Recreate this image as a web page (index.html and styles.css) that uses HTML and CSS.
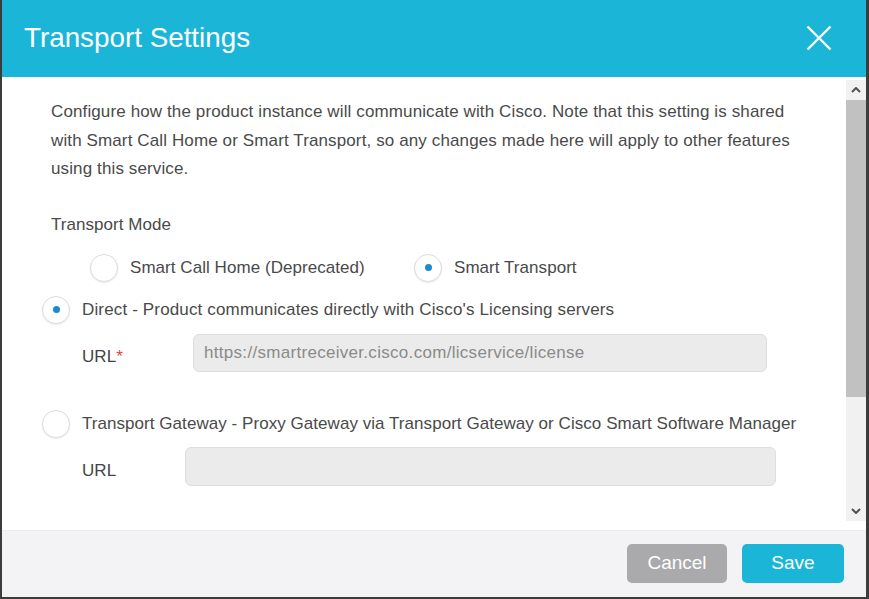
FILE: index.html
```html
<!DOCTYPE html>
<html lang="en">
<head>
  <meta charset="UTF-8" />
  <meta name="viewport" content="width=device-width, initial-scale=1.0" />
  <title>Transport Settings</title>
  <link rel="stylesheet" href="styles.css">
</head>
<body>

  <div class="dialog">

    <!-- Header -->
    <header class="dlg-head">
      <h1>Transport Settings</h1>
      <button class="close" aria-label="Close">
        <svg width="26" height="26" viewBox="0 0 26 26">
          <path d="M1.5 1.5 L24.5 24.5 M24.5 1.5 L1.5 24.5" stroke="#fff" stroke-width="2.4" fill="none" />
        </svg>
      </button>
    </header>

    <!-- Body -->
    <div class="dlg-body">
      <div class="content">
        <p class="intro">
          Configure how the product instance will communicate with Cisco. Note that this setting is shared
          with Smart Call Home or Smart Transport, so any changes made here will apply to other features
          using this service.
        </p>

        <div class="label">Transport Mode</div>

        <div class="mode-row">
          <label class="radio mode-first"><span class="dot"></span>Smart Call Home (Deprecated)</label>
          <label class="radio"><span class="dot on"></span>Smart Transport</label>
        </div>

        <label class="radio option direct"><span class="dot on"></span>Direct - Product communicates directly with Cisco's Licensing servers</label>
        <div class="url-row url-direct">
          <span class="url-label">URL<span class="req">*</span></span>
          <div class="field">https://smartreceiver.cisco.com/licservice/license</div>
        </div>

        <label class="radio option gateway"><span class="dot"></span>Transport Gateway - Proxy Gateway via Transport Gateway or Cisco Smart Software Manager</label>
        <div class="url-row url-gateway">
          <span class="url-label">URL</span>
          <div class="field"></div>
        </div>
      </div>

      <!-- fake scrollbar -->
      <div class="scrollbar">
        <div class="arrow">
          <svg width="10" height="6" viewBox="0 0 10 6"><path d="M1 5 L5 1 L9 5" stroke="#505050" stroke-width="2" fill="none" /></svg>
        </div>
        <div class="thumb"></div>
        <div class="track"></div>
        <div class="arrow">
          <svg width="10" height="6" viewBox="0 0 10 6"><path d="M1 1 L5 5 L9 1" stroke="#505050" stroke-width="2" fill="none" /></svg>
        </div>
      </div>
    </div>

    <!-- Footer -->
    <footer class="dlg-foot">
      <button class="btn cancel">Cancel</button>
      <button class="btn save">Save</button>
    </footer>

  </div>

</body>
</html>
```

FILE: styles.css
```css
* {
  box-sizing: border-box;
}

html, body {
  height: 100%;
}

body {
  margin: 0;
  padding: 0 3px 2px 2px;
  background-color: #3c3c3c;
  font-family: "Liberation Sans", Arial, sans-serif;
  color: #4a4a4a;
  overflow: hidden;
}

.dialog {
  width: 864px;
  height: 597px;
  display: flex;
  flex-direction: column;
  background-color: #fff;
}

/* Header */
.dlg-head {
  height: 77px;
  flex: none;
  background-color: #1bb5d8;
  display: flex;
  align-items: center;
  justify-content: space-between;
  padding: 0 34px 0 22px;
}

.dlg-head h1 {
  margin: 0;
  color: #fff;
  font-weight: normal;
  font-size: 27.8px;
  padding-bottom: 2px;
}

.close {
  background: none;
  border: none;
  padding: 0;
  width: 26px;
  height: 26px;
  cursor: pointer;
  margin-bottom: 1px;
}

/* Body */
.dlg-body {
  flex: 1;
  display: flex;
  overflow: hidden;
}

.content {
  flex: 1;
  padding: 21px 0 0 40px;
  font-size: 17px;
  letter-spacing: 0.05px;
}

.intro {
  margin: 0 0 0 9px;
  width: 762px;
  line-height: 28.5px;
  letter-spacing: 0.12px;
}

.label {
  margin: 31px 0 0 9px;
  line-height: 20px;
}

.radio {
  display: flex;
  align-items: center;
  height: 28px;
  white-space: nowrap;
}

.dot {
  width: 28px;
  height: 28px;
  flex: none;
  border-radius: 50%;
  border: 1px solid #dcdcdc;
  box-shadow: 0 1px 2px rgba(0, 0, 0, 0.08);
  background-color: #fff;
  margin-right: 12px;
  display: flex;
  align-items: center;
  justify-content: center;
}

.dot.on::after {
  content: "";
  width: 7px;
  height: 7px;
  border-radius: 50%;
  background-color: #1a8bcc;
}

.mode-row {
  display: flex;
  margin: 19px 0 0 48px;
}

.mode-first {
  width: 324px;
}

.option {
  margin-top: 14px;
}

.direct {
  letter-spacing: 0.15px;
}

.gateway {
  margin-top: 38px;
}

.url-row {
  display: flex;
  align-items: center;
  margin-left: 40px;
}

.url-label {
  color: #444;
  padding-top: 8px;
}

.req {
  color: #e2443e;
}

.field {
  border: 1px solid #dedede;
  border-radius: 6px;
  background-color: #ebebec;
  color: #8a8a8a;
  display: flex;
  align-items: center;
  padding-left: 10px;
  letter-spacing: 0.3px;
}

.url-direct {
  margin-top: 10px;
}

.url-direct .url-label {
  width: 111px;
}

.url-direct .field {
  width: 574px;
  height: 38px;
}

.url-gateway {
  margin-top: 9px;
}

.url-gateway .url-label {
  width: 103px;
  padding-top: 10px;
}

.url-gateway .field {
  width: 591px;
  height: 39px;
}

/* fake scrollbar */
.scrollbar {
  width: 20px;
  flex: none;
  display: flex;
  flex-direction: column;
  padding: 3px 0 9px;
  background-color: #fff;
}

.arrow {
  height: 20px;
  background-color: #f1f1f1;
  display: flex;
  align-items: center;
  justify-content: center;
}

.thumb {
  height: 297px;
  background-color: #c1c1c1;
}

.track {
  flex: 1;
  background-color: #f1f1f1;
}

/* Footer */
.dlg-foot {
  height: 67px;
  flex: none;
  background-color: #f3f3f5;
  border-top: 1px solid #ececee;
  display: flex;
  align-items: center;
  justify-content: flex-end;
  gap: 15px;
  padding: 0 22px 2px 0;
}

.btn {
  height: 39px;
  border: none;
  border-radius: 5px;
  color: #fff;
  font-family: "Liberation Sans", Arial, sans-serif;
  font-size: 19px;
  cursor: pointer;
}

.cancel {
  width: 100px;
  background-color: #aaaaac;
}

.save {
  width: 102px;
  background-color: #1bb5d8;
}
```
